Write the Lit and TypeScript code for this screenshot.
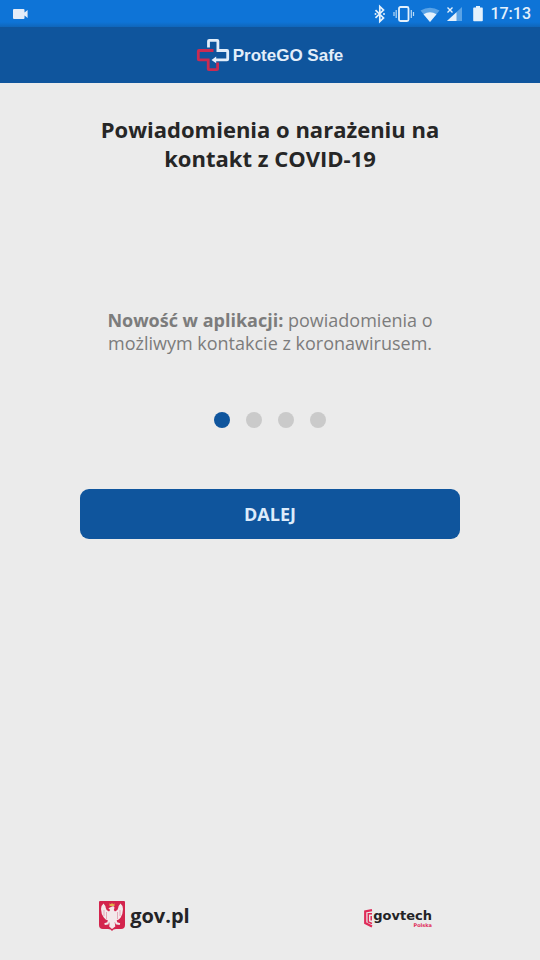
import { LitElement, html, css, svg } from "lit";
import { customElement, state } from "lit/decorators.js";
import { classMap } from "lit/directives/class-map.js";

@customElement("status-bar")
class StatusBar extends LitElement {
  static styles = css`
    :host {
      display: flex;
      align-items: center;
      justify-content: space-between;
      height: 27px;
      padding: 0 9px 0 12px;
      background: linear-gradient(#0e74d7 0 22px, #0f66bb);
      color: #e4f1fc;
      font: 500 16px/28px Roboto, sans-serif;
    }
    svg {
      display: block;
    }
    .icons {
      display: flex;
      align-items: center;
      gap: 7px;
    }
  `;

  render() {
    return html`
      <svg width="18" height="18" viewBox="0 0 18 18" fill="#e4ecf8" aria-hidden="true">
        <path d="M2 4h9.500q1 0 1 1v2.400L15.600 5v8l-3.100-2.400V13q0 1-1 1H2q-1 0-1-1V5q0-1 1-1z" />
      </svg>
      <div class="icons">
        <svg width="110" height="20" viewBox="0 0 110 20" fill="#e4f1fc" aria-hidden="true">
          <path d="M2.500 6.200l8 7.700-3.700 3.600V2.500l3.700 3.600-8 7.700" fill="none" stroke="#e4f1fc" stroke-width="1.700" />
          <circle cx="2.500" cy="10" r="1" /><circle cx="11" cy="10" r="1" />
          <rect x="26" y="3" width="9.500" height="14" rx="1.500" fill="none" stroke="#e4f1fc" stroke-width="1.800" />
          <path d="M23.200 6v8M38.300 6v8M21 8v4M40.500 8v4" stroke="#b9daf6" stroke-width="1.200" />
          <path d="M47.500 6.500Q57 .8 66.500 6.500L57 18z" fill="#5aa3e6" />
          <path d="M50.500 10.300Q57 6.300 63.500 10.300L57 18z" />
          <path d="M89 3v14H74z" fill="#5aa3e6" />
          <path d="M83.500 8.200V17H74z" />
          <path d="M74.500 3.500l5 5m0-5l-5 5" stroke="#e4f1fc" stroke-width="1.400" />
          <path d="M101 3.600h2V2h4v1.600h2q.8 0 .8.800v12q0 .8-.8.800h-8q-.8 0-.8-.8v-12q0-.8.800-.8z" />
        </svg>
        <span>17:13</span>
      </div>
    `;
  }
}

@customElement("app-header")
class AppHeader extends LitElement {
  static styles = css`
    :host {
      display: flex;
      align-items: center;
      justify-content: center;
      gap: 3px;
      height: 56px;
      background: #0f559d;
      color: #e3eefa;
      font: 700 17px/24px "Liberation Sans", Arial, sans-serif;
    }
    svg {
      display: block;
    }
    span {
      padding: 2px 1px 0 0;
    }
  `;

  render() {
    return html`
      <svg width="34" height="34" viewBox="0 0 34 34" fill="none" stroke-width="2.800" aria-hidden="true">
        <path d="M17.500 12.500H3q-.7 0-.7.700v8q0 .7.700.700h9.200v9q0 .7.700.700h8q.7 0 .7-.7v-6.500" stroke="#c92b52" />
        <path d="M12.500 9.500V3q0-.7.700-.7h8q.7 0 .7.700v9.500H31q.7 0 .7.700v8q0 .7-.7.700H19" stroke="#e3eefa" />
        <path d="M15.500 21.900l4.700-3.300v6.600z" fill="#e3eefa" />
      </svg>
      <span>ProteGO Safe</span>
    `;
  }
}

@customElement("partner-footer")
class PartnerFooter extends LitElement {
  static styles = css`
    :host {
      display: flex;
      align-items: center;
      justify-content: space-between;
      padding: 0 20% 28px 18%;
    }
    a {
      display: flex;
      align-items: center;
      color: #232326;
      text-decoration: none;
    }
    svg {
      display: block;
    }
    .gov {
      gap: 5px;
      padding-left: 2px;
      font: 700 20px/32px "Open Sans", sans-serif;
    }
    .govtech {
      padding-top: 4px;
    }
    .name {
      display: flex;
      flex-direction: column;
      align-items: flex-end;
      font: 700 13px/14px "DejaVu Sans", sans-serif;
    }
    .country {
      color: #df2a58;
      font-size: 5px;
      line-height: 5px;
    }
  `;

  private feathers = svg`
    <path d="M5 9v6M7.500 11v7M21 9v6M18.500 11v7M10.500 21l-2 3M15.500 21l2 3" stroke="#df8ca0" stroke-width=".7" />
  `;

  render() {
    return html`
      <a class="gov" href="#gov">
        <svg width="26" height="30" viewBox="0 0 26 30" aria-hidden="true">
          <path d="M1 0h24q1 0 1 1v23q0 4-4 4h-5q-3 0-4 2-1-2-4-2H4q-4 0-4-4V1q0-1 1-1z" fill="#d3244d" />
          <path
            d="M13 5.500q2-.8 2.500 1.200L14.800 9l1.200 1.500q3-1 3.200-3.500.3-2.500 2.300-4.500 2.500 2 2.500 5.500-.1 5-2.300 8.500-1.700 2.500-4 2.700l.5 2 3 1-.5 1.800-3.200-.5-1.700-1.500.5 3.500L13 28l-2.800-2.500.5-3.500L9 23.500l-3.200.5-.5-1.800 3-1 .5-2q-2.300-.2-4-2.700Q2.100 13 2 8q0-3.500 2.500-5.500 2 2 2.300 4.500.2 2.500 3.200 3.500l1.200-1.500-1.800-1.700z"
            fill="#f3e9eb"
          />
          ${this.feathers}
          <path d="M10.500 5V2.300l1.300 1L13 2l1.200 1.300 1.300-1V5z" fill="#e1b34b" />
        </svg>
        <span>gov.pl</span>
      </a>
      <a class="govtech" href="#govtech">
        <svg width="9" height="19" viewBox="0 0 9 19" fill="none" stroke="#df2a58" aria-hidden="true">
          <path d="M8 1.200L1.200 2.500v11.500L8 17.500" stroke-width="2.200" />
          <path d="M8 4.700H4.300v8.300L8 14.500" stroke-width="1.500" />
          <path d="M7.200 7v4.500" stroke-width="1.500" />
        </svg>
        <span class="name"><span>govtech</span><span class="country">Polska</span></span>
      </a>
    `;
  }
}

@customElement("app-root")
class AppRoot extends LitElement {
  @state() private step = 0;

  static styles = css`
    :host {
      display: flex;
      flex-direction: column;
      min-height: 100vh;
      background: #ebebeb;
      font-family: "Open Sans", sans-serif;
    }
    main {
      flex: 1;
      display: flex;
      flex-direction: column;
      align-items: center;
      padding: 32px 80px;
      text-align: center;
    }
    h1 {
      max-width: 360px;
      margin: 0 0 136px;
      color: #262626;
      font-size: 22px;
      font-weight: 700;
      line-height: 29px;
    }
    p {
      max-width: 340px;
      margin: 0;
      color: #7c7c7c;
      font-size: 18px;
      line-height: 23px;
    }
    .dots {
      display: flex;
      gap: 16px;
      margin: 57px 0 61px;
    }
    .dot {
      width: 16px;
      height: 16px;
      padding: 0;
      border: 0;
      border-radius: 50%;
      background: #cacaca;
    }
    .dot.active {
      background: #0f559d;
    }
    .next {
      align-self: stretch;
      height: 50px;
      border: 0;
      border-radius: 9px;
      background: #0f559d;
      color: #dcebfa;
      font: 700 18px/24px "Open Sans", sans-serif;
    }
  `;

  private next() {
    this.step = (this.step + 1) % 4;
  }

  render() {
    return html`
      <status-bar></status-bar>
      <app-header></app-header>
      <main>
        <h1>Powiadomienia o narażeniu na kontakt z COVID-19</h1>
        <p><b>Nowość w aplikacji:</b> powiadomienia o możliwym kontakcie z koronawirusem.</p>
        <div class="dots">
          ${[0, 1, 2, 3].map(
            (i) => html`<button
              class=${classMap({ dot: true, active: i === this.step })}
              aria-label=${`${i + 1}`}
              @click=${() => (this.step = i)}
            ></button>`
          )}
        </div>
        <button class="next" @click=${this.next}>DALEJ</button>
      </main>
      <partner-footer></partner-footer>
    `;
  }
}
